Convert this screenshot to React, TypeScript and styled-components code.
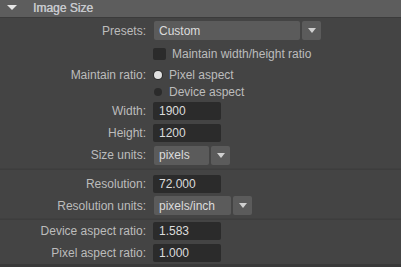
import React, { FunctionComponent } from 'react';
import styled, { createGlobalStyle } from 'styled-components';

const GlobalStyle = createGlobalStyle`
  html, body {
    margin: 0;
    padding: 0;
    background: #444444;
  }
  body {
    font-family: "Liberation Sans", Arial, sans-serif;
    font-size: 12px;
  }
`;

const Panel = styled.div`
  width: 401px;
  height: 267px;
  background: #444444;
  overflow: hidden;
  display: flex;
  flex-direction: column;
`;

const Header = styled.div`
  height: 17px;
  background: #5d5d5d;
  border-bottom: 1px solid #3b3b3b;
  display: flex;
  align-items: center;
  padding-left: 7px;
  flex-shrink: 0;
`;

const Arrow = styled.span`
  width: 0;
  height: 0;
  border-left: 5px solid transparent;
  border-right: 5px solid transparent;
  border-top: 5px solid #e6e6e6;
  margin-right: 16px;
  margin-top: -3px;
`;

const HeaderTitle = styled.span`
  color: #c6c8cc;
  font-size: 12px;
  margin-top: -1px;
  text-shadow: 0.3px 0 0 #c6c8cc;
`;

const Section = styled.div<{ top?: number }>`
  display: flex;
  flex-direction: column;
  padding-top: ${(p) => p.top ?? 0}px;
`;

const Separator = styled.div`
  height: 3px;
  background: #3d3d3d;
  border-top: 1px solid #404040;
  box-sizing: border-box;
  margin-top: 2px;
`;

const Row = styled.div<{ h: number }>`
  height: ${(p) => p.h}px;
  display: grid;
  grid-template-columns: 146px 1fr;
  column-gap: 7px;
  align-items: center;
`;

const Label = styled.span`
  color: #bcbcbc;
  text-align: right;
  white-space: nowrap;
`;

const Cell = styled.div`
  display: flex;
  align-items: center;
`;

const Field = styled.div`
  width: 68px;
  height: 18px;
  background: #2b2b2b;
  border-radius: 2px;
  color: #dcdcdc;
  display: flex;
  align-items: center;
  padding-left: 6px;
  box-sizing: border-box;
`;

const Select = styled.div`
  display: flex;
  gap: 2px;
  height: 19px;
  margin-left: 1px;
`;

const SelectValue = styled.div<{ w: number }>`
  width: ${(p) => p.w}px;
  background: #5b5b5b;
  border-radius: 2px;
  color: #dcdcdc;
  display: flex;
  align-items: center;
  padding-left: 5px;
  box-sizing: border-box;
`;

const SelectButton = styled.div`
  width: 19px;
  background: #5b5b5b;
  border-radius: 2px;
  display: flex;
  align-items: center;
  justify-content: center;

  &::after {
    content: '';
    border-left: 4px solid transparent;
    border-right: 4px solid transparent;
    border-top: 5px solid #d0d0d0;
  }
`;

const Checkbox = styled.span`
  width: 13px;
  height: 12px;
  background: #2b2b2b;
  border-radius: 2px;
  margin-right: 6px;
`;

const Radio = styled.span<{ checked?: boolean }>`
  width: 8px;
  height: 8px;
  border-radius: 50%;
  background: ${(p) => (p.checked ? '#e0e0e0' : '#2b2b2b')};
  box-shadow: ${(p) => (p.checked ? '0 0 0 1px #2b2b2b' : 'none')};
  margin: 0 7px 0 1px;
`;

const OptionText = styled.span`
  color: #bcbcbc;
`;

const BottomBand = styled.div`
  margin-top: auto;
  height: 5px;
  background: #393939;
`;

const App: FunctionComponent = () => {
  return <Panel>
    <GlobalStyle />
    <Header>
      <Arrow />
      <HeaderTitle>Image Size</HeaderTitle>
    </Header>
    <Section top={1}>
      <Row h={23}>
        <Label>Presets:</Label>
        <Cell>
          <Select>
            <SelectValue w={146}>Custom</SelectValue>
            <SelectButton />
          </Select>
        </Cell>
      </Row>
      <Row h={24}>
        <span />
        <Cell><Checkbox /><OptionText>Maintain width/height ratio</OptionText></Cell>
      </Row>
      <Row h={17}>
        <Label>Maintain ratio:</Label>
        <Cell><Radio checked /><OptionText>Pixel aspect</OptionText></Cell>
      </Row>
      <Row h={17}>
        <span />
        <Cell><Radio /><OptionText>Device aspect</OptionText></Cell>
      </Row>
      <Row h={22}>
        <Label>Width:</Label>
        <Cell><Field>1900</Field></Cell>
      </Row>
      <Row h={22}>
        <Label>Height:</Label>
        <Cell><Field>1200</Field></Cell>
      </Row>
      <Row h={22}>
        <Label>Size units:</Label>
        <Cell>
          <Select>
            <SelectValue w={55}>pixels</SelectValue>
            <SelectButton />
          </Select>
        </Cell>
      </Row>
    </Section>
    <Separator />
    <Section top={3}>
      <Row h={22}>
        <Label>Resolution:</Label>
        <Cell><Field>72.000</Field></Cell>
      </Row>
      <Row h={21}>
        <Label>Resolution units:</Label>
        <Cell>
          <Select>
            <SelectValue w={77}>pixels/inch</SelectValue>
            <SelectButton />
          </Select>
        </Cell>
      </Row>
    </Section>
    <Separator />
    <Section>
      <Row h={22}>
        <Label>Device aspect ratio:</Label>
        <Cell><Field>1.583</Field></Cell>
      </Row>
      <Row h={22}>
        <Label>Pixel aspect ratio:</Label>
        <Cell><Field>1.000</Field></Cell>
      </Row>
    </Section>
    <BottomBand />
  </Panel>
}

export default App;
